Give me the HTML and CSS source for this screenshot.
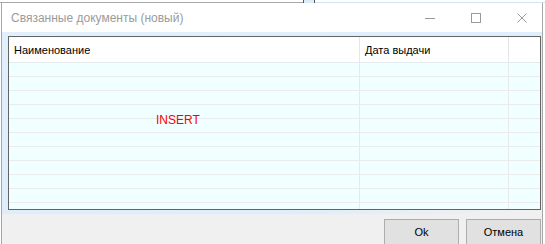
FILE: index.html
```html
<!DOCTYPE html>
<html lang="ru">
<head>
    <meta charset="UTF-8">
    <title>Связанные документы (новый)</title>
    <link rel="stylesheet" href="styles.css">
</head>
<body>
    <div class="behind">
        <div class="behind-left"></div>
        <div class="behind-tab"></div>
        <div class="behind-right"></div>
    </div>
    <div class="window">
        <div class="titlebar">
            <div class="title">Связанные документы (новый)</div>
            <div class="controls">
                <svg class="ctl" width="10" height="10" viewBox="0 0 10 10"><path d="M0 5.5h10" stroke="#9a9a9a" stroke-width="1"/></svg>
                <svg class="ctl" width="10" height="10" viewBox="0 0 10 10"><rect x="0.5" y="0.5" width="9" height="9" fill="none" stroke="#9a9a9a" stroke-width="1"/></svg>
                <svg class="ctl" width="10" height="10" viewBox="0 0 10 10"><path d="M0.5 0.5l9 9M9.5 0.5l-9 9" stroke="#9a9a9a" stroke-width="1"/></svg>
            </div>
        </div>
        <div class="panel">
            <div class="grid">
                <div class="grid-head">
                    <div class="cell col-name">Наименование</div>
                    <div class="cell col-date">Дата выдачи</div>
                    <div class="cell col-fill"></div>
                </div>
                <div class="grid-body">
                    <div class="row"><div class="cell col-name"></div><div class="cell col-date"></div><div class="cell col-fill"></div></div>
                    <div class="row"><div class="cell col-name"></div><div class="cell col-date"></div><div class="cell col-fill"></div></div>
                    <div class="row"><div class="cell col-name"></div><div class="cell col-date"></div><div class="cell col-fill"></div></div>
                    <div class="row"><div class="cell col-name"></div><div class="cell col-date"></div><div class="cell col-fill"></div></div>
                    <div class="row"><div class="cell col-name"></div><div class="cell col-date"></div><div class="cell col-fill"></div></div>
                    <div class="row"><div class="cell col-name"></div><div class="cell col-date"></div><div class="cell col-fill"></div></div>
                    <div class="row"><div class="cell col-name"></div><div class="cell col-date"></div><div class="cell col-fill"></div></div>
                    <div class="row"><div class="cell col-name"></div><div class="cell col-date"></div><div class="cell col-fill"></div></div>
                    <div class="row"><div class="cell col-name"></div><div class="cell col-date"></div><div class="cell col-fill"></div></div>
                    <div class="row"><div class="cell col-name"></div><div class="cell col-date"></div><div class="cell col-fill"></div></div>
                    <div class="row"><div class="cell col-name"></div><div class="cell col-date"></div><div class="cell col-fill"></div></div>
                    <div class="mode-label">INSERT</div>
                </div>
            </div>
        </div>
        <div class="footer">
            <button class="btn">Ok</button>
            <button class="btn">Отмена</button>
        </div>
    </div>
</body>
</html>
```

FILE: styles.css
```css
* {
    margin: 0;
    padding: 0;
    box-sizing: border-box;
}

body {
    font-family: 'Liberation Sans', Arial, sans-serif;
    background: #ffffff;
    width: 545px;
    height: 244px;
    overflow: hidden;
    color: #000;
}

/* окно на заднем плане */
.behind {
    display: flex;
    height: 3px;
}

.behind-left {
    width: 303px;
    border-bottom: 1px solid #a8a8a8;
}

.behind-tab {
    width: 12px;
    background: #dcecf9;
    border-left: 1px solid #555;
    border-right: 1px solid #555;
}

.behind-right {
    flex: 1;
    border-bottom: 1px solid #cfe4f6;
}

.window {
    width: 542px;
    margin-left: 0;
    border-left: 1px solid #a6a6a6;
    border-right: 1px solid #a6a6a6;
    margin-left: 1px;
}

.titlebar {
    display: flex;
    align-items: center;
    height: 29px;
    background: #fff;
    padding-left: 9px;
}

.title {
    flex: 1;
    font-size: 12px;
    color: #9b9b9b;
}

.controls {
    display: flex;
    align-items: center;
    gap: 36px;
    padding-right: 15px;
}

.ctl {
    display: block;
}

.panel {
    padding: 4px 1px 4px 6px;
    background: linear-gradient(168deg, #e2effc 0%, #dcedfc 80%, #f0f0f0 97%);
}

.grid {
    border: 1px solid #646464;
    font-size: 11px;
}

.grid-head {
    display: flex;
    height: 26px;
    background: #fff;
    border-bottom: 1px solid #e4ebef;
}

.grid-head .cell {
    display: flex;
    align-items: center;
    padding-left: 5px;
    border-right: 1px solid #e6e6e6;
}

.col-name {
    width: 351px;
}

.col-date {
    width: 149px;
}

.col-fill {
    flex: 1;
}

.grid-head .col-fill {
    border-right: none;
}

.grid-body {
    position: relative;
    height: 146px;
    overflow: hidden;
    background: #f0ffff;
}

.row {
    display: flex;
    height: 14px;
    border-bottom: 1px solid #ebebeb;
}

.row .cell {
    border-right: 1px solid #e8e8e8;
}

.row .col-fill {
    border-right: none;
}

.mode-label {
    position: absolute;
    left: 147px;
    top: 50px;
    font-size: 12px;
    line-height: 14px;
    color: #ff0000;
}

.footer {
    display: flex;
    justify-content: flex-end;
    gap: 7px;
    height: 30px;
    padding: 5px 1px 0 0;
    background: #f0f0f0;
}

.btn {
    width: 75px;
    height: 26px;
    font-family: 'Liberation Sans', Arial, sans-serif;
    font-size: 11px;
    line-height: 22px;
    background: #e1e1e1;
    border: 1px solid #adadad;
    color: #000;
}
```
